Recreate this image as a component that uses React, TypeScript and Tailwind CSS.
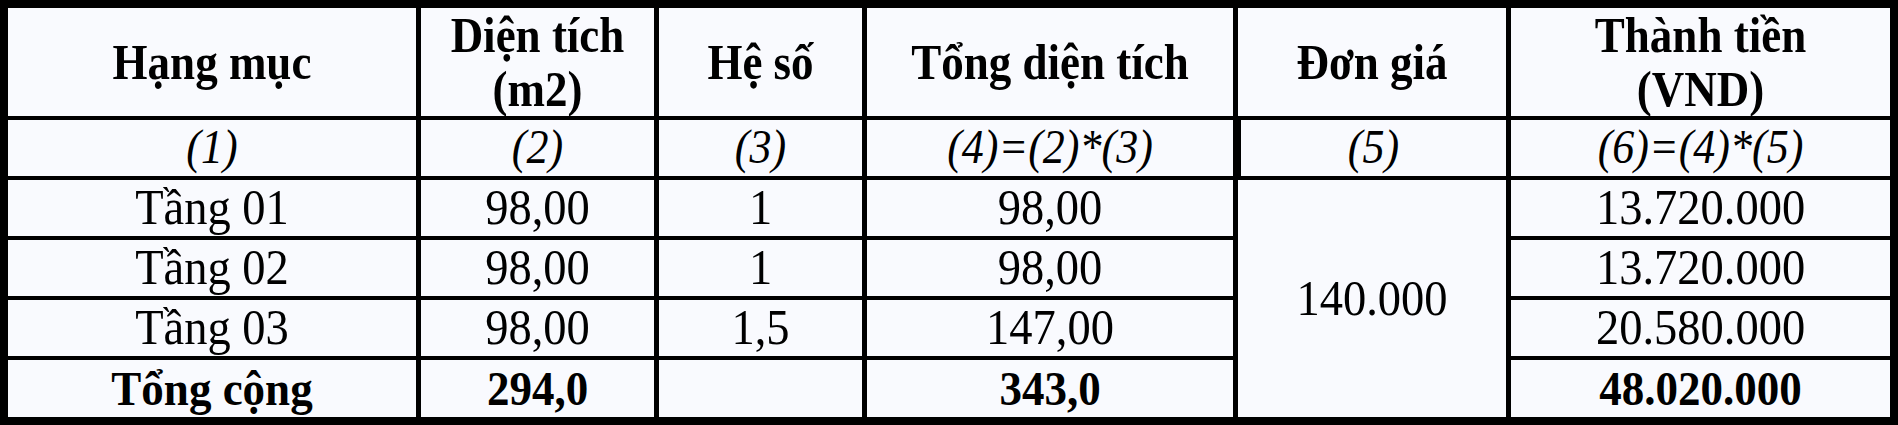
const cell = "flex items-center justify-center text-center bg-[#f9fafe] text-black";

const rows = [
  { name: "Tầng 01", area: "98,00", k: "1", total: "98,00", money: "13.720.000" },
  { name: "Tầng 02", area: "98,00", k: "1", total: "98,00", money: "13.720.000" },
  { name: "Tầng 03", area: "98,00", k: "1,5", total: "147,00", money: "20.580.000" },
];

// the source glyphs are a bit taller than Liberation Serif
function T({ children, tall }: { children: React.ReactNode; tall?: boolean }) {
  return <span className={tall ? "inline-block scale-y-[1.14]" : "inline-block scale-y-[1.08]"}>{children}</span>;
}

export default function App() {
  return (
    <div className="w-[1898px] h-[425px] bg-black p-[8px] grid grid-cols-[408px_233px_203px_366px_268px_379px] grid-rows-[108px_56px_56px_56px_56px_57px] gap-x-[5px] gap-y-[4px] font-['Liberation_Serif','Times_New_Roman',serif] text-[46.5px] leading-[48px]">
      {/* header */}
      <div className={`${cell} font-bold text-[45px]`}><T tall>Hạng mục</T></div>
      <div className={`${cell} font-bold text-[45px]`}><T tall>Diện tích<br />(m2)</T></div>
      <div className={`${cell} font-bold text-[45px]`}><T tall>Hệ số</T></div>
      <div className={`${cell} font-bold text-[45px]`}><T tall>Tổng diện tích</T></div>
      <div className={`${cell} font-bold text-[45px]`}><T tall>Đơn giá</T></div>
      <div className={`${cell} font-bold text-[45px]`}><T tall>Thành tiền<br />(VND)</T></div>

      {/* column numbering */}
      <div className={`${cell} italic text-[44px]`}><T>(1)</T></div>
      <div className={`${cell} italic text-[44px]`}><T>(2)</T></div>
      <div className={`${cell} italic text-[44px]`}><T>(3)</T></div>
      <div className={`${cell} italic text-[44px]`}><T>(4)=(2)*(3)</T></div>
      <div className={`${cell} italic text-[44px] border-l-[3px] border-black`}><T>(5)</T></div>
      <div className={`${cell} italic text-[44px]`}><T>(6)=(4)*(5)</T></div>

      {rows.map((r, i) => (
        <div key={r.name} className="contents">
          <div className={cell}><T>{r.name}</T></div>
          <div className={cell}><T>{r.area}</T></div>
          <div className={cell}><T>{r.k}</T></div>
          <div className={cell}><T>{r.total}</T></div>
          {i === 0 && <div className={`${cell} row-span-4`}><T>140.000</T></div>}
          <div className={cell}><T>{r.money}</T></div>
        </div>
      ))}

      {/* total */}
      <div className={`${cell} font-bold text-[45px]`}><T>Tổng cộng</T></div>
      <div className={`${cell} font-bold text-[45px]`}><T>294,0</T></div>
      <div className={cell}></div>
      <div className={`${cell} font-bold text-[45px]`}><T>343,0</T></div>
      <div className={`${cell} font-bold text-[45px]`}><T>48.020.000</T></div>
    </div>
  );
}
